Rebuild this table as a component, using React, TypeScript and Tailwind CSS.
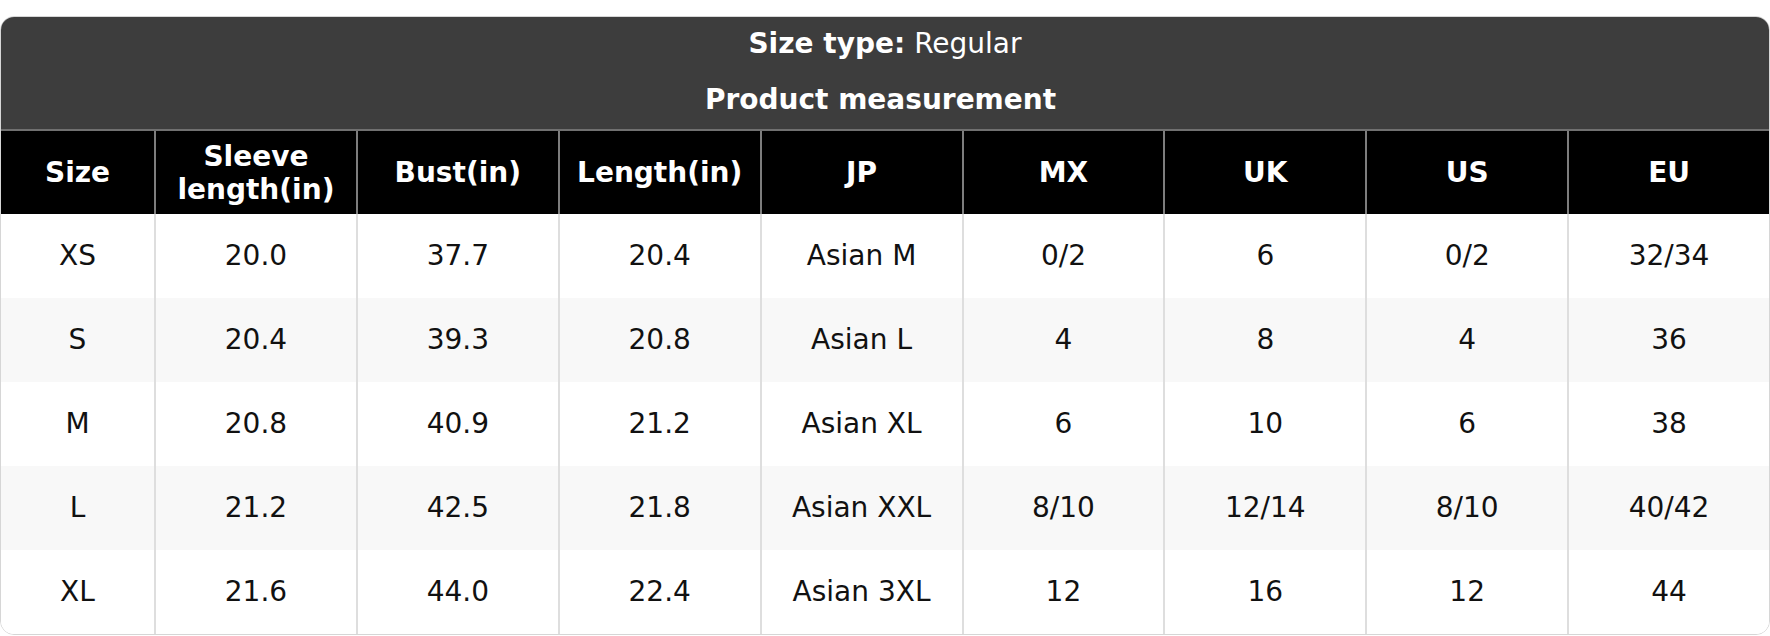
import React from "react";

const headers = ["Size", "Sleeve length(in)", "Bust(in)", "Length(in)", "JP", "MX", "UK", "US", "EU"];
const rows = [
  ["XS", "20.0", "37.7", "20.4", "Asian M", "0/2", "6", "0/2", "32/34"],
  ["S", "20.4", "39.3", "20.8", "Asian L", "4", "8", "4", "36"],
  ["M", "20.8", "40.9", "21.2", "Asian XL", "6", "10", "6", "38"],
  ["L", "21.2", "42.5", "21.8", "Asian XXL", "8/10", "12/14", "8/10", "40/42"],
  ["XL", "21.6", "44.0", "22.4", "Asian 3XL", "12", "16", "12", "44"],
];

export default function App() {
  return (
    <div className="w-[1770px] pt-4 bg-white" style={{ fontFamily: '"DejaVu Sans", Verdana, sans-serif' }}>
      <div className="rounded-[14px] overflow-hidden border border-[#d6d6d6] bg-white">
        <div className="bg-[#3d3d3d] text-white text-[28px]">
          <div className="h-[54px] flex items-center justify-center">
            <span className="font-bold">Size type:</span>
            <span className="ml-[9px]">Regular</span>
          </div>
          <div className="h-[58px] flex items-center justify-center font-bold pr-[9px]">Product measurement</div>
        </div>
        <div className="border-t-2 border-[#707070]">
          <div className="grid grid-cols-[153px_repeat(8,minmax(0,1fr))] bg-black text-white font-bold text-[28px] leading-[33px] h-[83px]">
            {headers.map((h, i) => (
              <div
                key={i}
                className={`flex items-center justify-center text-center px-2 ${i > 0 ? "border-l-2 border-[#7d7d7d]" : ""}`}
              >
                {h === "Sleeve length(in)" ? (
                  <span>
                    Sleeve
                    <br />
                    length(in)
                  </span>
                ) : (
                  h
                )}
              </div>
            ))}
          </div>
          {rows.map((r, ri) => (
            <div
              key={ri}
              className={`grid grid-cols-[153px_repeat(8,minmax(0,1fr))] h-[84px] text-[28px] text-[#111111] ${ri % 2 === 1 ? "bg-[#f8f8f8]" : "bg-white"}`}
            >
              {r.map((c, ci) => (
                <div
                  key={ci}
                  className={`flex items-center justify-center ${ci > 0 ? "border-l-2 border-[#dedede]" : ""}`}
                >
                  {c}
                </div>
              ))}
            </div>
          ))}
        </div>
      </div>
    </div>
  );
}
